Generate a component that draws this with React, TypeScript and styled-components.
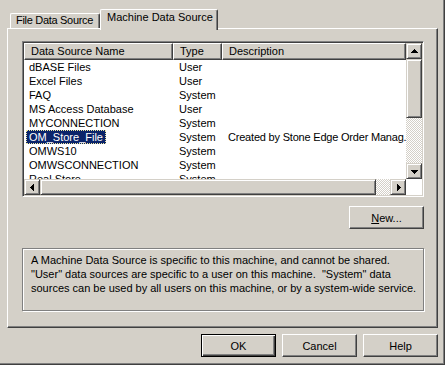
import React from "react";
import styled, { createGlobalStyle, css } from "styled-components";

// classic Windows 2000 palette
const face = "#d4d0c8";
const shadow = "#808080";
const dark = "#404040";
const navy = "#0a246a";

const GlobalStyle = createGlobalStyle`
  html, body { margin: 0; padding: 0; background: ${face}; }
  body {
    font-family: "Liberation Sans", Arial, sans-serif;
    font-size: 11px;
    color: #000;
  }
`;

const Dialog = styled.div`
  box-sizing: border-box;
  width: 445px;
  height: 365px;
  padding: 9px 7px 0 7px;
  background: ${face};
  box-shadow: inset -1px -1px ${dark}, inset -2px -2px ${shadow};
  display: flex;
  flex-direction: column;
`;

const TabStrip = styled.div`
  display: flex;
  align-items: flex-end;
  height: 19px;
  padding-left: 3px;
`;

const Tab = styled.div<{ $selected?: boolean; $width: number }>`
  box-sizing: border-box;
  flex: none;
  width: ${(p) => p.$width}px;
  height: 15px;
  padding-left: 5px;
  line-height: 13px;
  letter-spacing: -0.3px;
  border-top: 1px solid #fff;
  border-left: 1px solid #fff;
  border-right: 1px solid ${dark};
  border-radius: 2px 2px 0 0;
  box-shadow: inset -1px 0 ${shadow};
  white-space: nowrap;
  overflow: hidden;
  ${(p) =>
    p.$selected &&
    css`
      position: relative;
      z-index: 1;
      height: 21px;
      margin-bottom: -2px;
      padding: 1px 0 0 6px;
      letter-spacing: 0;
      background: ${face};
    `}
`;

const Panel = styled.div`
  box-sizing: border-box;
  width: 431px;
  height: 300px;
  border-top: 1px solid #fff;
  border-left: 1px solid #fff;
  border-right: 1px solid ${dark};
  border-bottom: 1px solid ${dark};
  box-shadow: inset -1px -1px ${shadow};
  padding: 12px 13px 0 14px;
  display: flex;
  flex-direction: column;
`;

const ListView = styled.div`
  box-sizing: border-box;
  height: 156px;
  padding: 1px;
  background: #fff;
  border: 1px solid;
  border-color: ${shadow} #fff #fff ${shadow};
  box-shadow: inset 1px 1px ${dark}, inset -1px -1px ${face};
  display: grid;
  grid-template-columns: 1fr 16px;
  grid-template-rows: 1fr 16px;
`;

const View = styled.div`
  overflow: hidden;
`;

const HeaderRow = styled.div`
  display: flex;
  height: 17px;
`;

const HeaderCell = styled.div<{ $width: number }>`
  box-sizing: border-box;
  flex: none;
  width: ${(p) => p.$width}px;
  height: 17px;
  padding-left: 6px;
  line-height: 15px;
  background: ${face};
  border-top: 1px solid #fff;
  border-left: 1px solid #fff;
  border-right: 1px solid ${dark};
  border-bottom: 1px solid ${dark};
  box-shadow: inset -1px -1px ${shadow};
  white-space: nowrap;
  overflow: hidden;
`;

const Row = styled.div`
  display: flex;
  height: 14px;
  line-height: 14px;
`;

const Cell = styled.div<{ $width: number; $pad?: number; $tight?: boolean }>`
  box-sizing: border-box;
  flex: none;
  width: ${(p) => p.$width}px;
  padding-left: ${(p) => p.$pad ?? 6}px;
  letter-spacing: ${(p) => (p.$tight ? "-0.2px" : "0")};
  white-space: nowrap;
  overflow: hidden;
`;

const Label = styled.span<{ $selected?: boolean }>`
  display: inline-block;
  box-sizing: border-box;
  height: 14px;
  line-height: 12px;
  padding: 0 2px;
  border: 1px dotted transparent;
  ${(p) =>
    p.$selected &&
    css`
      background: ${navy};
      color: #fff;
      border-color: #f0e8a0;
    `}
`;

const VScroll = styled.div`
  display: flex;
  flex-direction: column;
`;

const HScroll = styled.div`
  display: flex;
`;

const Raised = css`
  box-sizing: border-box;
  flex: none;
  background: ${face};
  border: 1px solid;
  border-color: ${face} ${dark} ${dark} ${face};
  box-shadow: inset 1px 1px #fff, inset -1px -1px ${shadow};
`;

const ScrollButton = styled.div`
  ${Raised}
  width: 16px;
  height: 16px;
  display: flex;
  align-items: center;
  justify-content: center;
`;

const Thumb = styled.div<{ $size: number; $vertical?: boolean }>`
  ${Raised}
  ${(p) =>
    p.$vertical
      ? css`
          height: ${p.$size}px;
        `
      : css`
          width: ${p.$size}px;
        `}
`;

const Track = styled.div`
  flex: 1;
  background: repeating-conic-gradient(#fff 0% 25%, ${face} 0% 50%) 0 0 / 2px 2px;
`;

const Corner = styled.div`
  background: #fff;
`;

const ArrowSvg = styled.svg<{ $rotate: number }>`
  display: block;
  transform: rotate(${(p) => p.$rotate}deg);
`;

type Dir = "up" | "down" | "left" | "right";
const rotations: Record<Dir, number> = { up: 0, right: 90, down: 180, left: 270 };

function Arrow({ dir }: { dir: Dir }) {
  return (
    <ArrowSvg width="7" height="7" viewBox="0 0 7 7" shapeRendering="crispEdges" $rotate={rotations[dir]}>
      <path d="M3 1h1v1h1v1h1v1h1v1H0V4h1V3h1V2h1z" fill="#000" />
    </ArrowSvg>
  );
}

const ButtonRow = styled.div<{ $top: number }>`
  display: flex;
  justify-content: flex-end;
  gap: 6px;
  margin-top: ${(p) => p.$top}px;
`;

const Button = styled.button<{ $default?: boolean }>`
  box-sizing: border-box;
  width: 75px;
  height: 23px;
  padding: 0;
  font: inherit;
  color: #000;
  background: ${face};
  border: 1px solid;
  border-color: #fff ${dark} ${dark} #fff;
  box-shadow: inset -1px -1px ${shadow};
  ${(p) =>
    p.$default &&
    css`
      border: 1px solid #000;
      box-shadow: inset 1px 1px #fff, inset -1px -1px ${dark}, inset -2px -2px ${shadow};
    `}
`;

const InfoBox = styled.div`
  box-sizing: border-box;
  margin-top: 19px;
  height: 63px;
  padding: 4px 8px;
  line-height: 14px;
  border: 1px solid ${shadow};
  box-shadow: inset 1px 1px #fff, 1px 1px #fff;
  white-space: pre;
`;

const columns = [149, 49, 184];

const sources = [
  { name: "dBASE Files", type: "User", desc: "" },
  { name: "Excel Files", type: "User", desc: "" },
  { name: "FAQ", type: "System", desc: "" },
  { name: "MS Access Database", type: "User", desc: "" },
  { name: "MYCONNECTION", type: "System", desc: "" },
  { name: "OM_Store_File", type: "System", desc: "Created by Stone Edge Order Manag.", selected: true },
  { name: "OMWS10", type: "System", desc: "" },
  { name: "OMWSCONNECTION", type: "System", desc: "" },
  { name: "Real Store", type: "System", desc: "" },
];

export default function App() {
  return (
    <>
      <GlobalStyle />
      <Dialog>
        <TabStrip>
          <Tab $width={90}>File Data Source</Tab>
          <Tab $width={118} $selected>
            Machine Data Source
          </Tab>
        </TabStrip>
        <Panel>
          <ListView>
            <View>
              <HeaderRow>
                <HeaderCell $width={columns[0]}>Data Source Name</HeaderCell>
                <HeaderCell $width={columns[1]}>Type</HeaderCell>
                <HeaderCell $width={columns[2]}>Description</HeaderCell>
              </HeaderRow>
              {sources.map((s) => (
                <Row key={s.name}>
                  <Cell $width={columns[0]} $pad={2}>
                    <Label $selected={s.selected}>{s.name}</Label>
                  </Cell>
                  <Cell $width={columns[1]}>{s.type}</Cell>
                  <Cell $width={columns[2]} $tight>
                    {s.desc}
                  </Cell>
                </Row>
              ))}
            </View>
            <VScroll>
              <ScrollButton>
                <Arrow dir="up" />
              </ScrollButton>
              <Thumb $vertical $size={59} />
              <Track />
              <ScrollButton>
                <Arrow dir="down" />
              </ScrollButton>
            </VScroll>
            <HScroll>
              <ScrollButton>
                <Arrow dir="left" />
              </ScrollButton>
              <Thumb $size={336} />
              <Track />
              <ScrollButton>
                <Arrow dir="right" />
              </ScrollButton>
            </HScroll>
            <Corner />
          </ListView>
          <ButtonRow $top={9}>
            <Button>
              <u>N</u>ew...
            </Button>
          </ButtonRow>
          <InfoBox>
            {"A Machine Data Source is specific to this machine, and cannot be shared.\n" +
              "\"User\" data sources are specific to a user on this machine.  \"System\" data\n" +
              "sources can be used by all users on this machine, or by a system-wide service."}
          </InfoBox>
        </Panel>
        <ButtonRow $top={6}>
          <Button $default>OK</Button>
          <Button>Cancel</Button>
          <Button>Help</Button>
        </ButtonRow>
      </Dialog>
    </>
  );
}
